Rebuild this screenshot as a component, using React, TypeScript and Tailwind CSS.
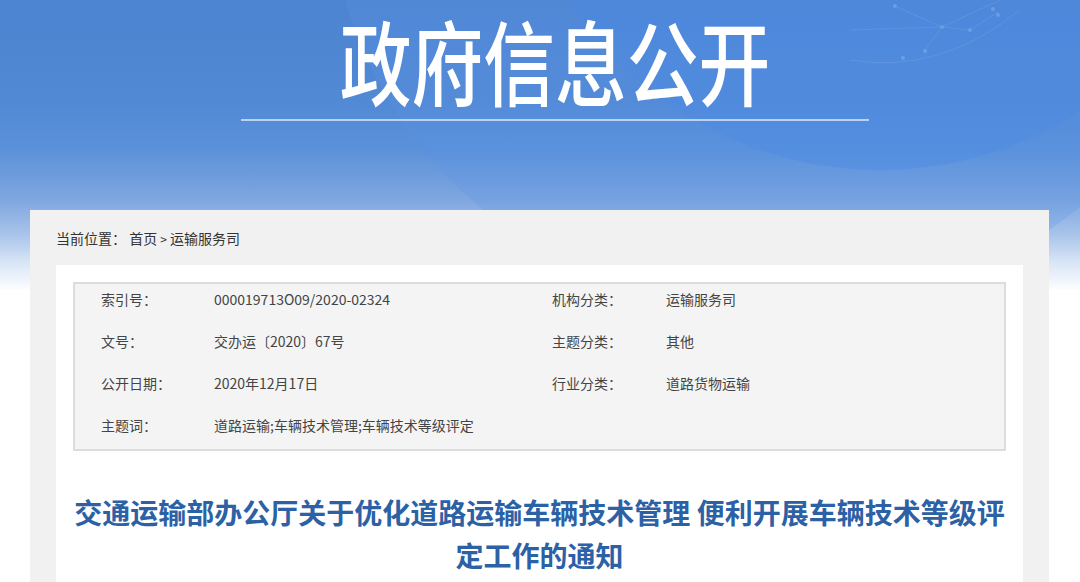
import React from 'react';

const meta = [
  ['索引号：', '000019713O09/2020-02324', '机构分类：', '运输服务司'],
  ['文号：', '交办运〔2020〕67号', '主题分类：', '其他'],
  ['公开日期：', '2020年12月17日', '行业分类：', '道路货物运输'],
  ['主题词：', '道路运输;车辆技术管理;车辆技术等级评定', '', ''],
];

const App = () => {
  return (
    <div className="min-h-[582px] bg-white font-['Noto_Sans_CJK_SC','Microsoft_YaHei',sans-serif] overflow-hidden">
      {/* banner */}
      <div className="relative h-[290px] overflow-hidden bg-[linear-gradient(180deg,#4d84d1_0px,#5189d5_100px,#5b91d9_150px,#7fa7df_200px,#a9c4ea_235px,#d8e5f6_262px,#ffffff_292px)]">
        <div className="absolute left-[330px] top-[-520px] w-[900px] h-[820px] rounded-full bg-[#5b95e6]/25" />
        <div className="absolute left-[510px] top-[-570px] w-[740px] h-[740px] rounded-full bg-[#4a8ae4]/40" />
        <svg className="absolute left-[850px] top-0 opacity-20" width="230" height="70" viewBox="0 0 230 70">
          <g stroke="#cfe0fa" strokeWidth="0.6" fill="none">
            <path d="M0 60 Q90 75 170 10" />
            <path d="M0 30 L92 27 L150 0" />
            <path d="M45 6 L92 27 L75 50" />
            <path d="M92 27 L120 30 L148 12" />
          </g>
          <g fill="#e3edfc">
            <circle cx="45" cy="6" r="2" />
            <circle cx="92" cy="27" r="2" />
            <circle cx="120" cy="30" r="2" />
            <circle cx="75" cy="51" r="2" />
            <circle cx="53" cy="58" r="2" />
            <circle cx="143" cy="9" r="2" />
            <circle cx="148" cy="15" r="2" />
          </g>
        </svg>
        <div className="relative flex flex-col items-center pl-[30px]">
          <h1 className="mt-[4px] h-[110px] text-[92px] leading-[110px] font-medium text-white scale-x-[0.78] whitespace-nowrap">
            政府信息公开
          </h1>
          <div className="mt-[5px] w-[628px] h-[2px] bg-[#bcd2f2]" />
        </div>
      </div>

      {/* content panel */}
      <div className="relative -mt-[80px] mx-[30px] w-[1019px] bg-[#f1f1f1] px-[26px] pt-[20px] pb-[40px]">
        <div className="text-[14px] leading-[16px] text-[#333]">
          当前位置： 首页 <span className="text-[12px]">&gt;</span> 运输服务司
        </div>
        <div className="mt-[18px] bg-white px-[17px] pt-[17px] pb-[60px]">
          <div className="border-2 border-[#dcdcdc] bg-[#f4f4f4] pl-[26px] pt-[6px] pb-[15px]">
            <div className="grid grid-cols-[113px_338px_114px_1fr] gap-y-[24px] text-[14px] leading-[18px] text-[#444]">
              {meta.map((r, i) => (
                <React.Fragment key={i}>
                  <div>{r[0]}</div>
                  <div>{r[1]}</div>
                  <div>{r[2]}</div>
                  <div>{r[3]}</div>
                </React.Fragment>
              ))}
            </div>
          </div>
          <h2 className="mt-[40px] text-center text-[28px] leading-[43px] font-bold text-[#2c61a6]">
            交通运输部办公厅关于优化道路运输车辆技术管理 便利开展车辆技术等级评定工作的通知
          </h2>
        </div>
      </div>
    </div>
  );
};

export default App;
